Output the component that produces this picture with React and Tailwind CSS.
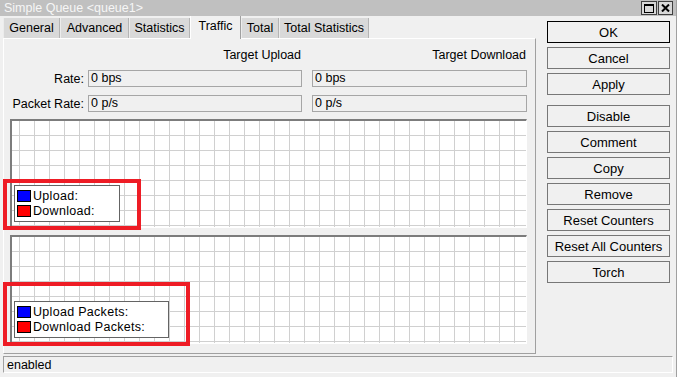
import { useId } from "react";

const tabs = [
  { label: "General", w: "w-[57px]" },
  { label: "Advanced", w: "w-[69px]" },
  { label: "Statistics", w: "w-[61px]" },
  { label: "Traffic", w: "w-[51px]", active: true },
  { label: "Total", w: "w-[38px]" },
  { label: "Total Statistics", w: "w-[90px]" },
];

const buttonGroups = [
  ["OK", "Cancel", "Apply"],
  ["Disable", "Comment", "Copy", "Remove", "Reset Counters", "Reset All Counters", "Torch"],
];

function Grid() {
  const id = useId().replace(/:/g, "");
  return (
    <svg className="absolute inset-0 h-full w-full" aria-hidden="true">
      <defs>
        <pattern id={id} x="7" y="0" width="15" height="15" patternUnits="userSpaceOnUse">
          <path d="M0.5 0V15M0 14.5H15" stroke="#d0d0d0" strokeWidth="1" fill="none" />
        </pattern>
      </defs>
      <rect width="100%" height="100%" fill={`url(#${id})`} />
    </svg>
  );
}

function Graph({ items, legendW, markW }) {
  return (
    <div className="relative ml-[6px] h-[109px] w-[517px] border-t-2 border-l-2 border-b border-r border-t-[#7c7c7c] border-l-[#7c7c7c] border-b-white border-r-white bg-white">
      <Grid />
      <div
        className={`absolute left-[2px] bottom-[5px] flex h-[37px] ${legendW} flex-col justify-center gap-[3px] border border-[#646464] bg-white pl-[2px]`}
      >
        {items.map((it) => (
          <div key={it.label} className="flex h-[12px] items-center gap-[2px]">
            <span className={`h-[12px] w-[14px] border border-black ${it.color}`} />
            <span className="leading-none tracking-[0.3px]">{it.label}</span>
          </div>
        ))}
      </div>
      <div className={`pointer-events-none absolute -left-[9px] -bottom-[3px] ${markW} border-4 border-[#ee1c25]`} />
    </div>
  );
}

function Field({ value, w }) {
  return (
    <div className={`${w} flex h-[17px] items-center border border-[#a6a6a6] bg-[#f0f0f0] pl-[2px] leading-none`}>
      {value}
    </div>
  );
}

export default function App() {
  return (
    <div
      className="flex h-[377px] w-[677px] flex-col overflow-hidden border-r border-[#a0a0a0] bg-[#f0f0f0] text-[12.5px] leading-[16px] text-black"
      style={{ fontFamily: '"Liberation Sans", Arial, sans-serif' }}
    >
      {/* title bar */}
      <div className="flex h-[16px] shrink-0 items-center justify-between bg-[#c0c0c0] pl-[4px] pr-[3px]">
        <span className="text-[12.5px] leading-none text-[#f6f6f6]">Simple Queue &lt;queue1&gt;</span>
        <div className="flex gap-[1px] self-start pt-[1px]">
          <div className="flex h-[14px] w-[16px] items-center justify-center border border-[#404040] bg-[#d8d8d8]">
            <div className="h-[9px] w-[10px] border border-black border-t-2" />
          </div>
          <div className="flex h-[14px] w-[15px] items-center justify-center border border-[#404040] bg-[#d8d8d8]">
            <svg width="9" height="8" viewBox="0 0 9 8">
              <path d="M1 0.5L8 7.5M8 0.5L1 7.5" stroke="black" strokeWidth="2" />
            </svg>
          </div>
        </div>
      </div>

      <div className="flex h-[338px] shrink-0">
        {/* left: tabs + page */}
        <div className="ml-[3px] flex w-[533px] flex-col">
          <div className="flex h-[22px] items-end">
            {tabs.map((t) =>
              t.active ? (
                <div
                  key={t.label}
                  className={`${t.w} relative z-10 -mb-[1px] flex h-[23px] items-center justify-center border-l border-r border-l-white border-r-[#a0a0a0] bg-[#f0f0f0] pb-[4px]`}
                >
                  {t.label}
                </div>
              ) : (
                <div
                  key={t.label}
                  className={`${t.w} flex h-[20px] items-center justify-center border-l border-r border-l-[#ececec] border-r-[#b4b4b4] bg-[#d9d9d9]`}
                >
                  {t.label}
                </div>
              )
            )}
          </div>
          <div className="flex h-[316px] flex-col border border-t-white border-l-white border-r-[#a0a0a0] border-b-[#a0a0a0]">
            <div className="mt-[8px] flex h-[16px] items-center">
              <div className="w-[80px]" />
              <div className="ml-[4px] w-[213px] text-right">Target Upload</div>
              <div className="ml-[11px] w-[214px] text-right">Target Download</div>
            </div>
            <div className="mt-[7px] flex h-[17px] items-center">
              <div className="w-[80px] text-right">Rate:</div>
              <div className="ml-[4px]"><Field value="0 bps" w="w-[214px]" /></div>
              <div className="ml-[10px]"><Field value="0 bps" w="w-[215px]" /></div>
            </div>
            <div className="mt-[8px] flex h-[17px] items-center">
              <div className="w-[80px] text-right">Packet Rate:</div>
              <div className="ml-[4px]"><Field value="0 p/s" w="w-[214px]" /></div>
              <div className="ml-[10px]"><Field value="0 p/s" w="w-[215px]" /></div>
            </div>
            <div className="mt-[7px]">
              <Graph
                legendW="w-[106px]"
                markW="w-[138px] h-[51px]"
                items={[
                  { label: "Upload:", color: "bg-[#0000ff]" },
                  { label: "Download:", color: "bg-[#ff0000]" },
                ]}
              />
            </div>
            <div className="mt-[7px]">
              <Graph
                legendW="w-[155px]"
                markW="w-[187px] h-[64px]"
                items={[
                  { label: "Upload Packets:", color: "bg-[#0000ff]" },
                  { label: "Download Packets:", color: "bg-[#ff0000]" },
                ]}
              />
            </div>
          </div>
        </div>

        {/* right: buttons */}
        <div className="ml-[11px] flex w-[123px] flex-col gap-[10px] pt-[5px]">
          {buttonGroups.map((group, gi) => (
            <div key={gi} className="flex flex-col gap-[4px]">
              {group.map((b) => (
                <div
                  key={b}
                  className={`flex h-[22px] items-center justify-center bg-[#f0f0f0] text-[13px] leading-none ${
                    b === "OK" ? "border border-black" : "border border-[#777777]"
                  }`}
                >
                  {b}
                </div>
              ))}
            </div>
          ))}
        </div>
      </div>

      {/* status bar */}
      <div className="ml-[3px] mt-[2px] flex h-[17px] w-[670px] items-center border border-t-[#a0a0a0] border-l-[#a0a0a0] border-r-white border-b-white pl-[3px] pt-[1px] leading-none">
        enabled
      </div>
    </div>
  );
}
